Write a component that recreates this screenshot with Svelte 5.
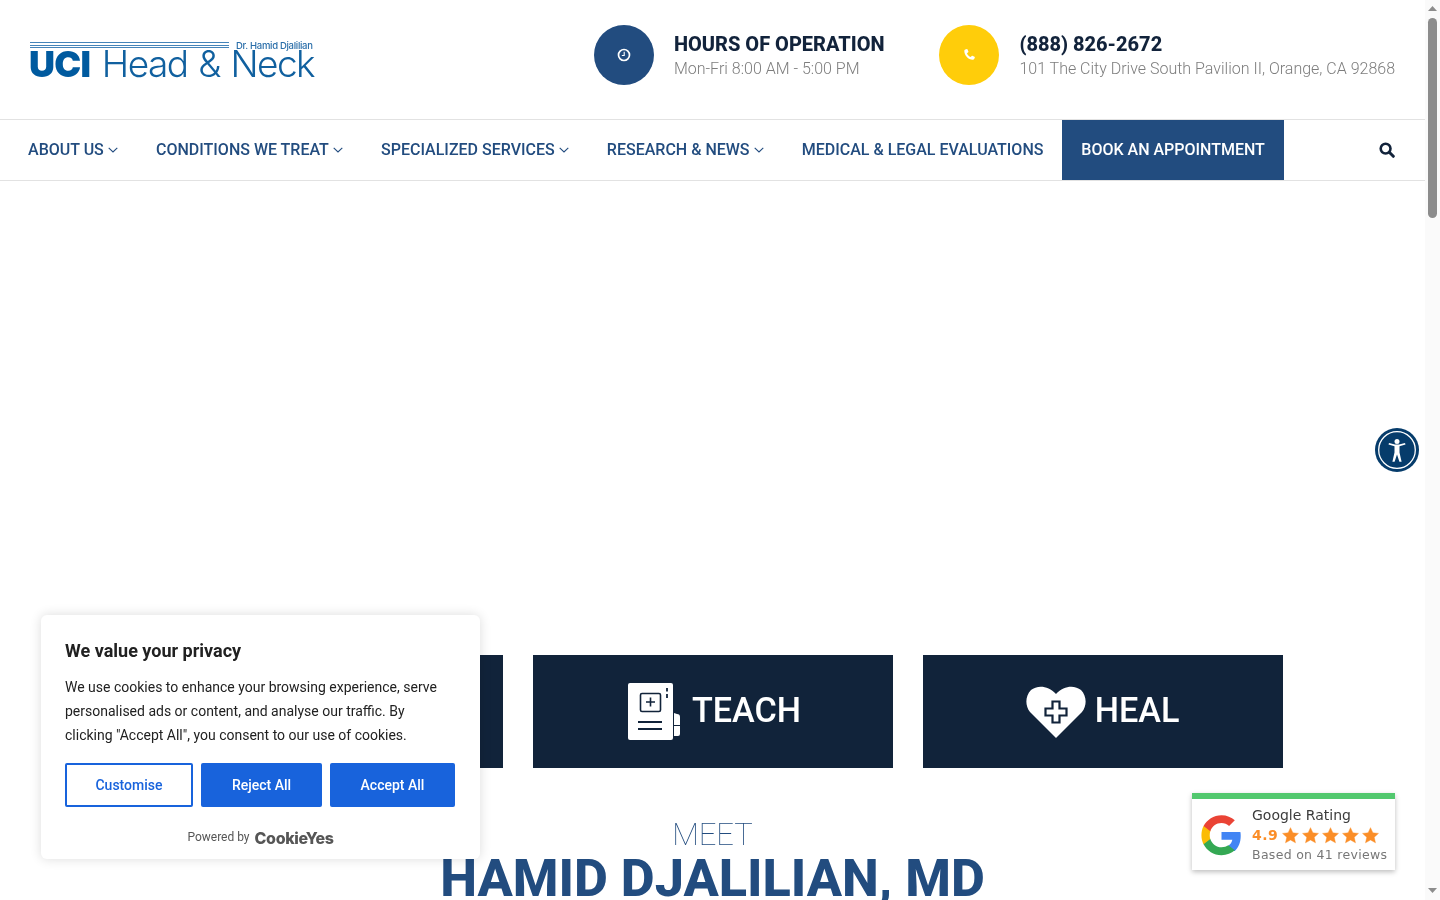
<script>
  const navItems = [
    { label: 'About Us', caret: true },
    { label: 'Conditions We Treat', caret: true },
    { label: 'Specialized Services', caret: true },
    { label: 'Research & News', caret: true },
    { label: 'Medical & Legal Evaluations', caret: false }
  ];
</script>

<div class="page">
  <header class="top">
    <a class="logo" href="#home">
      <div class="logo-top">
        <div class="lines"><i></i><i></i><i></i></div>
        <span class="dr">Dr. Hamid Djalilian</span>
      </div>
      <div class="logo-main"><b>UCI</b><span>Head &amp; Neck</span></div>
    </a>
    <div class="contacts">
      <div class="contact">
        <div class="disc navy">
          <svg viewBox="0 0 14 14" width="14" height="14"><circle cx="7" cy="7" r="5.5" fill="none" stroke="#fff" stroke-width="1.7"/><path d="M7.2 3.8V7.5H4.8" fill="none" stroke="#fff" stroke-width="1.1"/></svg>
        </div>
        <div class="c-text">
          <div class="c-title">Hours of Operation</div>
          <div class="c-sub">Mon-Fri 8:00 AM - 5:00 PM</div>
        </div>
      </div>
      <div class="contact">
        <div class="disc yellow">
          <svg viewBox="0 0 14 14" width="14" height="14"><path d="M3.2 1.6 4.9 1c.3 0 .5.1.6.4l.9 2.2c.1.3 0 .5-.2.7L5 5.3c.4 1.5 2 3.200 3.700 3.800l1-1.200c.2-.2.5-.3.7-.2l2.100 1c.3.100.4.400.3.700l-.6 1.600c-.2.500-.8.800-1.500.8C6.300 11.700 2.400 7.400 2.300 3c0-.6.300-1.200.900-1.400Z" fill="#fff"/></svg>
        </div>
        <div class="c-text">
          <div class="c-title phone">(888) 826-2672</div>
          <div class="c-sub">101 The City Drive South Pavilion II, Orange, CA 92868</div>
        </div>
      </div>
    </div>
  </header>

  <nav class="nav">
    {#each navItems as item}
      <a class="nav-link" href="#menu">
        {item.label}
        {#if item.caret}
          <svg class="caret" viewBox="0 0 10 6" width="10" height="6"><path d="M.7.8 5 5 9.300.8" fill="none" stroke="currentColor" stroke-width="1.100"/></svg>
        {/if}
      </a>
    {/each}
    <a class="nav-link cta" href="#book">Book an Appointment</a>
    <button class="search" aria-label="Search">
      <svg viewBox="0 0 16 16" width="16" height="16"><circle cx="6.600" cy="6.600" r="4.900" fill="none" stroke="#12233b" stroke-width="2.600"/><path d="m10.300 10.300 4 4" stroke="#12233b" stroke-width="3" stroke-linecap="round"/></svg>
    </button>
  </nav>

  <main>
    <div class="hero"></div>
    <section class="cards">
      <div class="card"></div>
      <div class="card">
        <svg class="ico teach-ico" viewBox="0 0 53 58" width="53" height="58">
          <path d="M3 1h41a2 2 0 0 1 2 2v53a2 2 0 0 1-2 2H3a2 2 0 0 1-2-2V3a2 2 0 0 1 2-2Z" fill="#fff"/>
          <path d="M47 31l3 1a3 3 0 0 1 3 3v8h-6ZM47 44h6v8a2 2 0 0 1-2 2h-4Z" fill="#fff"/>
          <rect x="13.500" y="11.500" width="20" height="18" rx="1.500" fill="none" stroke="#11233a" stroke-width="1.600"/>
          <path d="M23.500 15.500v9M19 20h9" stroke="#11233a" stroke-width="1.600"/>
          <path d="M40 6v3.500M40 12v4" stroke="#11233a" stroke-width="1.800"/>
          <path d="M11 40h24M11 47h24" stroke="#11233a" stroke-width="1.800"/>
        </svg>
        <span>TEACH</span>
      </div>
      <div class="card heal-card">
        <svg class="ico" viewBox="0 0 60 52" width="60" height="52">
          <path d="M30 52 4 26C-1 20-1 10 5 4c6-5 17-5 25 4 8-9 19-9 25-4 6 6 6 16 1 22Z" fill="#fff"/>
          <path d="M26.500 15.500h7v7h7v7h-7v7h-7v-7h-7v-7h7Z" fill="#fff" stroke="#11233a" stroke-width="2.200"/>
        </svg>
        <span>HEAL</span>
      </div>
    </section>
    <section class="meet">
      <div class="meet-sub">MEET</div>
      <h1>HAMID DJALILIAN, MD</h1>
    </section>
  </main>
</div>

<aside class="a11y" aria-label="Accessibility">
  <svg viewBox="0 0 44 44" width="44" height="44">
    <circle cx="22" cy="22" r="22" fill="#063c6b"/>
    <circle cx="22" cy="22" r="18.300" fill="none" stroke="#fff" stroke-width="1.300"/>
    <circle cx="22" cy="13.500" r="2.500" fill="#fff"/>
    <path d="M13.500 16.600 19.500 18.300v6.100L17.400 33.800h2.200l2.400-7.300 2.400 7.300h2.200l-2.100-9.400v-6.100l6-1.700-.5-1.700-6 1.700h-4l-6-1.700Z" fill="#fff"/>
  </svg>
</aside>

<aside class="cookie">
  <h2>We value your privacy</h2>
  <p>We use cookies to enhance your browsing experience, serve personalised ads or content, and analyse our traffic. By clicking "Accept All", you consent to our use of cookies.</p>
  <div class="btns">
    <button class="outline">Customise</button>
    <button class="fill reject">Reject All</button>
    <button class="fill accept">Accept All</button>
  </div>
  <div class="powered"><span>Powered by</span> <b>CookieYes</b></div>
</aside>

<aside class="rating">
  <svg class="g" viewBox="0 0 48 48" width="41" height="41">
    <path fill="#4285F4" d="M46.500 24.500c0-1.600-.1-3.100-.4-4.500H24v9h12.700c-.6 2.900-2.200 5.400-4.700 7.100v5.900h7.600c4.400-4.100 6.900-10.100 6.900-17.500Z"/>
    <path fill="#34A853" d="M24 47c6.300 0 11.700-2.100 15.600-5.600L32 35.500c-2.100 1.400-4.800 2.300-8 2.300-6.100 0-11.300-4.100-13.100-9.700H3v6.100C6.900 41.900 14.800 47 24 47Z"/>
    <path fill="#FBBC05" d="M10.900 28.100c-.5-1.400-.7-2.900-.7-4.500s.3-3.100.7-4.500V13H3C1.400 16.200.5 19.800.5 23.600S1.400 31 3 34.200Z"/>
    <path fill="#EA4335" d="M24 9.400c3.400 0 6.500 1.200 8.900 3.500l6.700-6.700C35.600 2.500 30.300.2 24 .2 14.800.2 6.900 5.500 3 13l7.900 6.100C12.700 13.500 17.900 9.400 24 9.400Z"/>
  </svg>
  <div class="r-body">
    <div class="r-title">Google Rating</div>
    <div class="r-score">
      <b>4.9</b>
      {#each [1, 2, 3, 4, 5] as s}
        <svg viewBox="0 0 16 16" width="17" height="17"><path d="M8 .6l2.200 4.900 5.300.5-4 3.600 1.200 5.300L8 12.200l-4.700 2.700 1.200-5.300-4-3.600 5.300-.5Z" fill="#fb8e28" stroke="#fb8e28" stroke-width=".4" stroke-linejoin="round"/></svg>
      {/each}
    </div>
    <div class="r-sub">Based on 41 reviews</div>
  </div>
</aside>

<div class="scrollbar" aria-hidden="true">
  <svg class="arrow up" viewBox="0 0 9 5" width="9" height="5"><path d="M0 5 4.500 0 9 5Z" fill="#8c8c8c"/></svg>
  <div class="thumb"></div>
  <svg class="arrow down" viewBox="0 0 9 5" width="9" height="5"><path d="M0 0h9L4.500 5Z" fill="#8c8c8c"/></svg>
</div>

<style>
  :global(body) { margin: 0; background: #fff; font-family: Roboto, "Liberation Sans", sans-serif; }
  .page { width: 1425px; will-change: transform; }
  a { text-decoration: none; }

  .top { height: 119px; display: flex; align-items: center; justify-content: space-between; padding: 0 30px; border-bottom: 1px solid #e2e2e2; }
  .logo { display: block; width: 284px; color: #0f5a9c; margin-top: 1px; }
  .logo-top { display: flex; align-items: flex-start; gap: 7px; height: 9px; }
  .lines { width: 199px; display: flex; flex-direction: column; gap: 1.500px; padding-top: 1px; }
  .lines i { display: block; height: 1px; background: #4584b9; }
  .dr { font: 500 9.500px/1 Inter, sans-serif; letter-spacing: -.3px; color: #2a6ea9; white-space: nowrap; }
  .logo-main { display: flex; align-items: baseline; gap: 11.500px; margin: -1px 0 0 -1px; line-height: 30px; white-space: nowrap; }
  .logo-main b { font: 900 36px/30px Inter, sans-serif; color: #005a9f; letter-spacing: -.7px; }
  .logo-main span { font: 300 37px/30px Inter, sans-serif; color: #10609f; letter-spacing: -1.500px; word-spacing: 1.700px; }

  .contacts { display: flex; gap: 54.700px; margin-top: -9px; }
  .contact { display: flex; align-items: center; gap: 20px; }
  .c-text { padding-top: 2px; }
  .disc { width: 60px; height: 60px; border-radius: 50%; display: flex; align-items: center; justify-content: center; }
  .navy { background: #224c7f; }
  .yellow { background: #ffcd0a; }
  .c-title { font-size: 20px; font-weight: 800; line-height: 24px; color: #12233b; text-transform: uppercase; }
  .c-sub { font-size: 16px; font-weight: 300; line-height: 24px; color: #7d7d7d; white-space: nowrap; margin-top: 1px; }

  .nav { height: 60px; display: flex; align-items: stretch; padding-left: 9px; border-bottom: 1px solid #e2e2e2; }
  .nav-link { display: flex; align-items: center; gap: 4px; padding: 0 19.100px 2px; font-size: 16px; font-weight: 500; color: #224c7f; text-transform: uppercase; white-space: nowrap; }
  .caret { margin-top: 1px; }
  .cta { background: #224c7f; color: #fff; margin-left: -.6px; padding: 0 19.400px 2px; }
  .search { margin-left: 95px; background: none; border: 0; padding: 0; display: flex; align-items: center; }

  .hero { height: 474px; }
  .cards { display: flex; justify-content: center; gap: 30px; }
  .card { width: 360px; height: 113px; background: #11233a; color: #fff; display: flex; align-items: center; justify-content: center; gap: 12px; font-size: 34.200px; font-weight: 500; }
  .card span { padding-bottom: 4px; }
  .teach-ico { margin: 0 0 2px 3px; }
  .heal-card { gap: 9px; }
  .meet { text-align: center; margin-top: 49px; color: #224c7f; }
  .meet-sub { font-size: 31px; font-weight: 100; line-height: 36px; }
  .meet h1 { margin: 0; font-size: 52.200px; font-weight: 800; line-height: 52px; }

  .a11y { position: fixed; left: 1375px; top: 428px; width: 44px; height: 44px; }

  .cookie { position: fixed; left: 41px; top: 615px; width: 391px; height: 196px; padding: 24px; background: #fff; border-radius: 6px; box-shadow: 0 0 12px rgba(0,0,0,.14); color: #212121; }
  .cookie h2 { margin: 0 0 12px; font-size: 18px; font-weight: 700; line-height: 24px; }
  .cookie p { margin: 0; font-size: 14px; line-height: 24px; max-width: 385px; }
  .btns { display: flex; gap: 8px; margin-top: 16px; }
  .btns button { height: 44px; border-radius: 2px; font: 500 14px Roboto, sans-serif; box-sizing: border-box; }
  .outline { width: 128px; background: #fff; color: #1863dc; border: 2px solid #1863dc; }
  .fill { background: #1863dc; color: #fff; border: 0; }
  .reject { width: 121px; }
  .accept { width: 125px; }
  .powered { margin-top: 19px; display: flex; justify-content: center; align-items: center; gap: 5px; font-size: 12px; color: #555; }
  .powered b { font: 800 16px Inter, sans-serif; color: #565656; letter-spacing: -.35px; padding-top: 2px; }

  .rating { position: fixed; left: 1192px; top: 793px; width: 203px; height: 71px; background: #fff; border-top: 6px solid #52c86e; display: flex; align-items: center; box-shadow: 0 2px 5px rgba(0,0,0,.26); font-family: "DejaVu Sans", sans-serif; }
  .g { margin: 2px 0 0 9px; }
  .r-body { margin-left: 10px; }
  .r-title { font-size: 14px; line-height: 20px; color: #3c3c3c; }
  .r-score { display: flex; align-items: center; height: 20px; gap: 3px; color: #fb8e28; }
  .r-score b { font-size: 14px; font-weight: 700; margin-right: 1px; letter-spacing: .5px; }
  .r-sub { font-size: 12.500px; line-height: 19px; color: #777; letter-spacing: .3px; white-space: nowrap; }

  .scrollbar { position: fixed; top: 0; right: 0; width: 15px; height: 100vh; background: #fafafa; }
  .arrow { position: absolute; left: 3px; }
  .up { top: 6px; }
  .down { bottom: 7px; }
  .thumb { position: absolute; left: 3px; top: 18px; width: 9px; height: 200px; border-radius: 5px; background: #8c8c8c; }
</style>
